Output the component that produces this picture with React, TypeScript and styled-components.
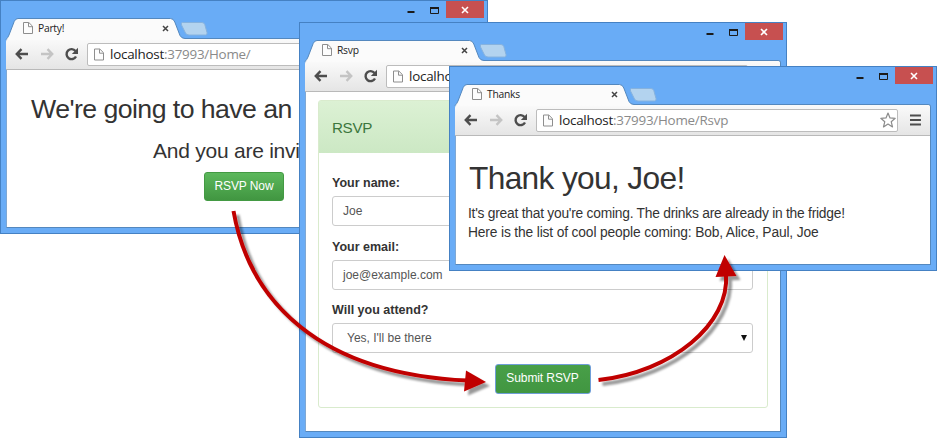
import React from "react";
import styled, { createGlobalStyle } from "styled-components";

const GlobalStyle = createGlobalStyle`
  * { box-sizing: border-box; }
  body { margin: 0; background: #fff; }
`;

const Desktop = styled.main`
  position: relative;
  width: 937px;
  height: 438px;
  overflow: hidden;
  background: #fff;
  font-family: "Liberation Sans", Arial, sans-serif;
  color: #333;
`;

const WindowFrame = styled.section<{ $x: number; $y: number; $height: number }>`
  position: absolute;
  left: ${(p) => p.$x}px;
  top: ${(p) => p.$y}px;
  width: 488px;
  height: ${(p) => p.$height}px;
  display: flex;
  flex-direction: column;
  padding: 0 5px 5px;
  border: 1px solid #4581c3;
  background: #69acf6;
`;

const TitleBar = styled.header`
  position: relative;
  z-index: 1;
  display: flex;
  flex: none;
  height: 37px;
  margin-right: -3px;
`;

const TabStrip = styled.div`
  position: relative;
  flex: 1;
  padding-top: 17px;
`;

const TabShape = styled.svg`
  position: absolute;
  left: 0;
  top: 16px;
  overflow: visible;
`;

const TabContent = styled.div`
  position: relative;
  display: flex;
  align-items: center;
  width: 168px;
  height: 20px;
  padding-left: 17px;
  padding-right: 5px;
`;

const TabTitle = styled.span`
  flex: 1;
  margin-left: 5px;
  font: 10.3px/18px "Open Sans", sans-serif;
  letter-spacing: -0.25px;
  color: #222;
`;

const Controls = styled.div`
  display: flex;
  height: 17px;
`;

const CaptionIcons = styled.svg`
  display: block;
  margin-right: 6px;
`;

const CloseButton = styled.div`
  display: flex;
  align-items: center;
  justify-content: center;
  width: 38px;
  height: 17px;
  margin-right: 1px;
  background: #c75050;
`;

const Client = styled.div`
  position: relative;
  flex: 1;
  min-height: 0;
  display: flex;
  flex-direction: column;
  border: 1px solid #5488be;
  border-left-color: #7fa8d4;
  border-radius: 3px 3px 0 0;
  background: #fff;
`;

const Toolbar = styled.nav`
  display: flex;
  flex: none;
  align-items: center;
  height: 31px;
  margin-left: -1px;
  padding: 0 9px;
  border-bottom: 1px solid #b9b9b9;
  border-radius: 3px 3px 0 0;
  background: linear-gradient(#fafafa, #e5e5e5);
`;

const NavIcons = styled.svg`
  flex: none;
  margin-right: 8px;
`;

const AddressBar = styled.div`
  display: flex;
  align-items: center;
  width: 364px;
  height: 23px;
  padding: 0 1px 0 6px;
  border: 1px solid #bcbcbc;
  border-radius: 2px;
  background: #fff;
`;

const Url = styled.span`
  flex: 1;
  margin-left: 6px;
  font: 13.4px/20px "Open Sans", sans-serif;
  letter-spacing: -0.24px;
  color: #8a8a8a;
  b { font-weight: 400; color: #222; }
`;

const MenuIcon = styled.svg`
  margin-left: 12px;
`;

const Viewport = styled.div`
  flex: 1;
  min-height: 0;
  margin-left: -1px;
  overflow: hidden;
`;

const PartyPage = styled(Viewport)`
  display: flex;
  flex-direction: column;
  align-items: flex-start;
  white-space: nowrap;
`;

const PartyHeading = styled.h1`
  margin: 23px 0 0 25px;
  font-size: 26.7px;
  font-weight: 400;
  line-height: 32px;
  letter-spacing: -0.56px;
`;

const PartySub = styled.h2`
  margin: 14px 0 0 147px;
  font-size: 21px;
  font-weight: 400;
  line-height: 24px;
  letter-spacing: -0.24px;
`;

const GreenButton = styled.button<{ $width: number; $focus?: boolean }>`
  width: ${(p) => p.$width}px;
  height: ${(p) => (p.$focus ? 30 : 29)}px;
  padding: 0;
  border: 1px solid ${(p) => (p.$focus ? "#6f9ed8" : "#439a43")};
  border-radius: 3px;
  background: ${(p) =>
    p.$focus ? "linear-gradient(#489f48, #419641)" : "linear-gradient(#5cb85c, #419641)"};
  font: 12px/27px "Liberation Sans", Arial, sans-serif;
  letter-spacing: -0.1px;
  color: #fff;
`;

const PartyAction = styled.div`
  margin: 9px 0 0 198px;
`;

const FormPage = styled(Viewport)`
  padding: 8px 18px 0 13px;
`;

const Panel = styled.form`
  height: 308px;
  width: 450px;
  border: 1px solid #d9ebcd;
  border-radius: 3px;
`;

const PanelHeading = styled.h3`
  height: 52px;
  margin: 0;
  padding-left: 13px;
  background: linear-gradient(#dcf1d4, #cce8c4);
  font-size: 15.2px;
  font-weight: 400;
  letter-spacing: -0.35px;
  line-height: 53px;
  color: #3c763d;
`;

const PanelBody = styled.div`
  display: flex;
  flex-direction: column;
  padding: 20px 14px 0 13px;
`;

const Field = styled.label`
  display: flex;
  flex-direction: column;
  height: 63.5px;
  font-size: 12.5px;
  font-weight: 700;
  line-height: 20px;
`;

const Control = styled.div<{ $indent?: number }>`
  display: flex;
  align-items: center;
  justify-content: space-between;
  height: 30px;
  margin-top: 3px;
  padding: 0 5px 0 ${(p) => p.$indent ?? 10}px;
  border: 1px solid #ccc;
  border-radius: 3px;
  background: #fff;
  font-size: 12px;
  font-weight: 400;
  color: #555;
`;

const SubmitRow = styled.div`
  display: flex;
  justify-content: center;
`;

const ThanksPage = styled(Viewport)`
  padding: 25px 0 0 14px;
`;

const ThanksHeading = styled.h1`
  margin: 0 0 9px;
  font-size: 31.7px;
  font-weight: 400;
  line-height: 34px;
  letter-spacing: -0.66px;
`;

const Paragraph = styled.p<{ $tracking: number }>`
  margin: 0 0 0 -1px;
  font-size: 13.8px;
  line-height: 19px;
  letter-spacing: ${(p) => p.$tracking}px;
  white-space: nowrap;
`;

const Arrows = styled.svg`
  position: absolute;
  inset: 0;
  pointer-events: none;
`;

const PageIcon = ({ height = 12 }: { height?: number }) => (
  <svg width="10" height={height} viewBox="0 0 10 12" fill="#fdfdfd" stroke="#8e8e8e">
    <path d="M.5.5h5.3l3.7 3.7v7.3h-9z" />
    <path d="M5.5.7v4h4" fill="none" />
  </svg>
);

type BrowserProps = {
  x: number;
  y: number;
  height: number;
  title: string;
  path: string;
  children: React.ReactNode;
};

const Browser = ({ x, y, height, title, path, children }: BrowserProps) => (
  <WindowFrame $x={x} $y={y} $height={height}>
    <TitleBar>
      <TabStrip>
        <TabShape width="210" height="24" viewBox="0 0 210 24">
          <path
            d="M.5 22.5V21.5Q2 20.5 3 18L8.2 4.5Q9.5 1.5 12 1.5H164.5Q167.5 1.5 168.8 5L174 18.5Q175.5 21.5 179 21.5V22.5Z"
            fill="#fbfbfb"
          />
          <path
            d="M0 22.5Q2 20.5 3 18L8.2 4.5Q9.5 1.5 12 1.5H164.5Q167.5 1.5 168.8 5L174 18.5Q175.5 21.5 179 21.5"
            fill="none"
            stroke="#5488be"
          />
          <path
            d="M176.500 5.500h19.500q2 0 2.800 2l2.200 8q.5 2.500-1.500 2.500h-16.500q-2.500 0-3.500-2l-4-8q-.8-2.500 1-2.500z"
            fill="#b3d3ef"
            stroke="#86b2de"
          />
        </TabShape>
        <TabContent>
          <PageIcon />
          <TabTitle>{title}</TabTitle>
          <svg width="7" height="7" viewBox="0 0 7 7" stroke="#444" strokeWidth="1.5">
            <path d="M1 1l5 5M6 1L1 6" />
          </svg>
        </TabContent>
      </TabStrip>
      <Controls>
        <CaptionIcons width="34" height="17" viewBox="0 0 34 17">
          <path d="M1.500 11h7" stroke="#1b1b1b" strokeWidth="2" />
          <path d="M24.500 6.500h8v6h-8z" fill="none" stroke="#1b1b1b" />
          <path d="M24 7h9" stroke="#1b1b1b" strokeWidth="2" />
        </CaptionIcons>
        <CloseButton>
          <svg width="8" height="8" viewBox="0 0 8 8" stroke="#fff" strokeWidth="1.6">
            <path d="M1 1l6 6M7 1L1 7" />
          </svg>
        </CloseButton>
      </Controls>
    </TitleBar>
    <Client>
      <Toolbar>
        <NavIcons width="64" height="16" viewBox="0 0 64 16" fill="none" strokeWidth="2.4">
          <path d="M13 8H1.8M6.5 3.2L1.8 8L6.5 12.8" stroke="#4d4d4d" />
          <path d="M26 8h11.2M32.5 3.2L37.2 8L32.5 12.8" stroke="#c4c4c4" />
          <path d="M60.5 5A5 5 0 1 0 61 10.5" stroke="#4d4d4d" />
          <path d="M63 1.8V8h-6.2z" fill="#4d4d4d" />
        </NavIcons>
        <AddressBar>
          <PageIcon height={13} />
          <Url>
            <b>localhost</b>:{path}
          </Url>
          <svg width="16" height="16" viewBox="0 0 16 16" fill="#fff" stroke="#8b8b8b" strokeWidth="1.2" strokeLinejoin="round">
            <path d="M8 1l2 4.900 5.200.4-4 3.400 1.300 5.200L8 12.100l-4.500 2.800 1.300-5.200-4-3.400L6 5.900z" />
          </svg>
        </AddressBar>
        <MenuIcon width="11" height="12" viewBox="0 0 11 12" stroke="#4d4d4d" strokeWidth="2.2">
          <path d="M0 1.500h11M0 6h11M0 10.500h11" />
        </MenuIcon>
      </Toolbar>
      {children}
    </Client>
  </WindowFrame>
);

export default function App() {
  return (
    <Desktop>
      <GlobalStyle />
      <Browser x={0} y={0} height={234} title="Party!" path="37993/Home/">
        <PartyPage>
          <PartyHeading>We're going to have an</PartyHeading>
          <PartySub>And you are invited</PartySub>
          <PartyAction>
            <GreenButton $width={80}>RSVP Now</GreenButton>
          </PartyAction>
        </PartyPage>
      </Browser>
      <Browser x={299} y={22} height={416} title="Rsvp" path="37993/Home/Rsvp">
        <FormPage>
          <Panel>
            <PanelHeading>RSVP</PanelHeading>
            <PanelBody>
              <Field>
                Your name:
                <Control>Joe</Control>
              </Field>
              <Field>
                Your email:
                <Control>joe@example.com</Control>
              </Field>
              <Field>
                Will you attend?
                <Control $indent={14}>
                  Yes, I'll be there
                  <svg width="6" height="6" viewBox="0 0 6 6">
                    <path d="M0 0h6L3 6z" fill="#111" />
                  </svg>
                </Control>
              </Field>
              <SubmitRow>
                <GreenButton $width={96} $focus type="button">
                  Submit RSVP
                </GreenButton>
              </SubmitRow>
            </PanelBody>
          </Panel>
        </FormPage>
      </Browser>
      <Browser x={449} y={66} height={205} title="Thanks" path="37993/Home/Rsvp">
        <ThanksPage>
          <ThanksHeading>Thank you, Joe!</ThanksHeading>
          <Paragraph $tracking={-0.24}>
            It's great that you're coming. The drinks are already in the fridge!
          </Paragraph>
          <Paragraph $tracking={-0.15}>
            Here is the list of cool people coming: Bob, Alice, Paul, Joe
          </Paragraph>
        </ThanksPage>
      </Browser>
      <Arrows width="937" height="438" viewBox="0 0 937 438">
        <defs>
          <filter id="shadow" x="-20%" y="-20%" width="140%" height="140%">
            <feDropShadow dx="4" dy="4" stdDeviation="1.2" floodColor="#000" floodOpacity=".4" />
          </filter>
        </defs>
        <g filter="url(#shadow)" fill="none" stroke="#c00000" strokeWidth="4">
          <path d="M233.5 211C249 300 318 374 468 380.5" />
          <path d="M466 370.5L486 382L464 391.5z" fill="#c00000" stroke="none" />
        </g>
        <g filter="url(#shadow)" fill="none" stroke="#c00000" strokeWidth="4">
          <path d="M598.5 380C672 372 730 324 726 274" />
          <path d="M724.5 255L736.5 276L715.5 277z" fill="#c00000" stroke="none" />
        </g>
      </Arrows>
    </Desktop>
  );
}
